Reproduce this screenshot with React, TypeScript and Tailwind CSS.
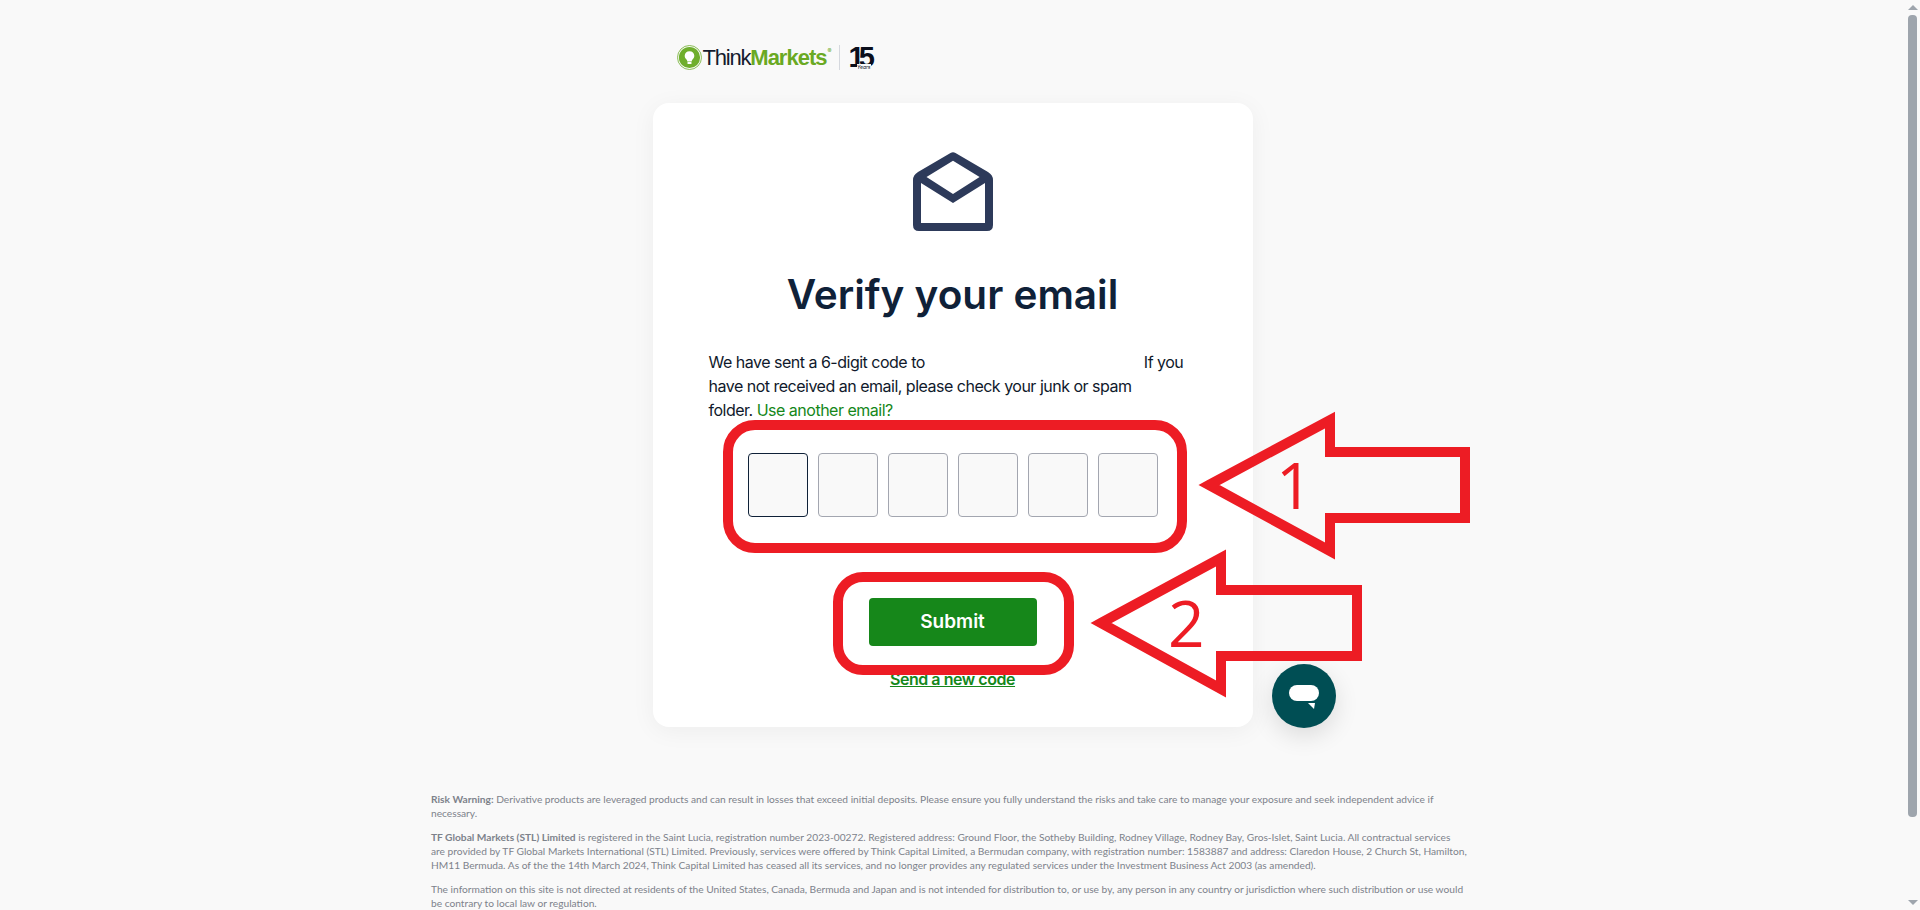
const codeSlots = [0, 1, 2, 3, 4, 5];

function Logo() {
  return (
    <div className="flex items-center h-[25px]">
      <svg width="25" height="25" viewBox="0 0 25 25" className="shrink-0">
        <circle cx="12.5" cy="12.5" r="12" fill="none" stroke="#6fae2c" strokeWidth="0.8" />
        <circle cx="12.5" cy="12.5" r="10.6" fill="#6fae2c" />
        <path
          d="M12.5 6.2c-2.8 0-4.8 2-4.8 4.6 0 1.7.9 2.8 1.8 3.8.5.6.8 1.2.8 1.9h4.4c0-.7.3-1.3.8-1.9.9-1 1.8-2.1 1.8-3.8 0-2.6-2-4.6-4.8-4.6z"
          fill="#ffffff"
        />
        <rect x="10.5" y="17" width="4" height="2" rx="0.6" fill="#ffffff" />
      </svg>
      <span className="ml-[1px] text-[22px] leading-[25px] tracking-[-1.2px] font-['Liberation_Sans',sans-serif] text-[#151b2e]">
        Think
      </span>
      <span className="text-[22px] leading-[25px] tracking-[-1px] font-semibold font-['Liberation_Sans',sans-serif] text-[#6aa923]">
        Markets
      </span>
      <span className="self-start mt-[2px] ml-[1px] text-[6px] leading-[8px] text-[#6aa923]">®</span>
      <div className="ml-[7px] w-px h-[25px] bg-[#d5d8de]" />
      <div className="relative ml-[9px] w-[22px] h-[25px]">
        <span className="block text-[29px] leading-[24px] font-bold tracking-[-6px] font-['Liberation_Sans',sans-serif] text-[#0b0f1c]">
          15
        </span>
        <span className="absolute right-0 bottom-0 text-[5px] leading-[6px] italic bg-[#f9f9f9] text-[#0b0f1c]">
          Years
        </span>
      </div>
    </div>
  );
}

function EnvelopeIcon() {
  return (
    <svg width="80" height="79" viewBox="0 0 80 79" className="shrink-0">
      <path
        fillRule="evenodd"
        fill="#2d3a5a"
        d="M37.5 1 Q40 -0.6 42.5 1 L75 20 Q80 23 80 28 L80 73 Q80 79 74 79 L6 79 Q0 79 0 73 L0 28 Q0 23 5 20 Z M40 8.7 L13.5 25 L40 42 L66.6 25 Z M8 31 L8 71 L72 71 L72 31 L40 51 Z"
      />
    </svg>
  );
}

function Scrollbar() {
  return (
    <div className="w-[15px] shrink-0 flex flex-col items-center bg-[#f9f9f9]">
      <div className="h-[15px] flex items-center justify-center">
        <div className="w-0 h-0 border-x-[5px] border-x-transparent border-b-[5px] border-b-[#9ea5ad]" />
      </div>
      <div className="w-[9px] h-[802px] rounded-[4px] bg-[#9ea5ad]" />
      <div className="flex-1" />
      <div className="h-[15px] flex items-center justify-center">
        <div className="w-0 h-0 border-x-[5px] border-x-transparent border-t-[5px] border-t-[#9ea5ad]" />
      </div>
    </div>
  );
}

export default function App() {
  return (
    <div className="relative flex h-screen overflow-hidden bg-[#f9f9f9] font-['Inter',sans-serif]">
      <main className="flex-1 flex flex-col items-center pt-[45px]">
        <div className="w-[600px] pl-[24px] shrink-0">
          <Logo />
        </div>

        <div className="mt-[33px] w-[600px] h-[624px] shrink-0 bg-white rounded-[16px] shadow-[0_4px_24px_rgba(0,0,0,0.05)] flex flex-col items-center pt-[49px]">
          <EnvelopeIcon />
          <h1 className="mt-[40px] text-[40.5px] leading-[48px] font-semibold text-[#0f2138]">Verify your email</h1>

          <p className="mt-[31px] w-[488px] text-[16px] leading-[24px] tracking-[-0.5px] text-[#10192b] whitespace-nowrap">
            We have sent a 6-digit code to
            <span className="inline-block w-[219px]" />
            If you
            <br />
            have not received an email, please check your junk or spam
            <br />
            folder. <a className="text-[#15871a]">Use another email?</a>
          </p>

          <div className="mt-[31px] flex gap-[10px]">
            {codeSlots.map((slot) => (
              <input
                key={slot}
                maxLength={1}
                className={`w-[60px] h-[64px] rounded-[4px] border bg-[#f9f9f9] ${
                  slot === 0 ? 'border-[#0f2138]' : 'border-[#a3a6b0]'
                }`}
              />
            ))}
          </div>

          <button className="mt-[81px] w-[168px] h-[48px] shrink-0 rounded-[4px] bg-[#16871a] text-white text-[19px] font-semibold">
            Submit
          </button>
          <a className="mt-[21px] text-[16px] leading-[24px] font-semibold tracking-[-0.45px] underline text-[#15871a]">
            Send a new code
          </a>
        </div>

        <footer className="mt-[65px] w-[1043px] shrink-0 flex flex-col gap-[10px] text-[10.2px] leading-[14px] text-[#7d828b] font-['Lato',sans-serif]">
          <p>
            <strong className="font-bold">Risk Warning:</strong> Derivative products are leveraged products and can
            result in losses that exceed initial deposits. Please ensure you fully understand the risks and take care to
            manage your exposure and seek independent advice if necessary.
          </p>
          <p>
            <strong className="font-bold">TF Global Markets (STL) Limited</strong> is registered in the Saint Lucia,
            registration number 2023-00272. Registered address: Ground Floor, the Sotheby Building, Rodney Village, Rodney
            Bay, Gros-Islet, Saint Lucia. All contractual services
            <br />
            are provided by TF Global Markets International (STL) Limited. Previously, services were offered by Think
            Capital Limited, a Bermudan company, with registration number: 1583887 and address: Claredon House, 2 Church
            St, Hamilton,
            <br />
            HM11 Bermuda. As of the the 14th March 2024, Think Capital Limited has ceased all its services, and no longer
            provides any regulated services under the Investment Business Act 2003 (as amended).
          </p>
          <p>
            The information on this site is not directed at residents of the United States, Canada, Bermuda and Japan and
            is not intended for distribution to, or use by, any person in any country or jurisdiction where such
            distribution or use would be contrary to local law or regulation.
          </p>
        </footer>
      </main>

      <Scrollbar />

      {/* chat launcher */}
      <div className="absolute left-[1272px] top-[664px] w-[64px] h-[64px] rounded-full bg-[#004e54] shadow-[0_8px_24px_rgba(0,0,0,0.12)] flex items-center justify-center">
        <svg width="32" height="28" viewBox="0 0 32 28">
          <rect x="1" y="3" width="30" height="16" rx="8" fill="#ffffff" />
          <path d="M20 21h7l-1 6z" fill="#ffffff" />
        </svg>
      </div>

      {/* hand drawn annotations on top of the page */}
      <div className="absolute left-[723px] top-[420px] w-[464px] h-[133px] border-[10px] border-[#ed1c24] rounded-[32px]" />
      <div className="absolute left-[833px] top-[572px] w-[241px] h-[103px] border-[10px] border-[#ed1c24] rounded-[30px]" />
      <svg className="absolute left-0 top-0 pointer-events-none" width="1920" height="910" viewBox="0 0 1920 910">
        <path
          d="M1209 485 L1330 420 L1330 452 L1465 452 L1465 518 L1330 518 L1330 551 Z"
          fill="none"
          stroke="#ed1c24"
          strokeWidth="10"
        />
        <path
          d="M1101 623 L1221 558 L1221 590 L1357 590 L1357 656 L1221 656 L1221 689 Z"
          fill="none"
          stroke="#ed1c24"
          strokeWidth="10"
        />
        <text x="1276" y="509" fontFamily="'Open Sans', sans-serif" fontWeight="400" fontSize="64" fill="#ed1c24">
          1
        </text>
        <text x="1168" y="647" fontFamily="'Open Sans', sans-serif" fontWeight="400" fontSize="64" fill="#ed1c24">
          2
        </text>
      </svg>
    </div>
  );
}
